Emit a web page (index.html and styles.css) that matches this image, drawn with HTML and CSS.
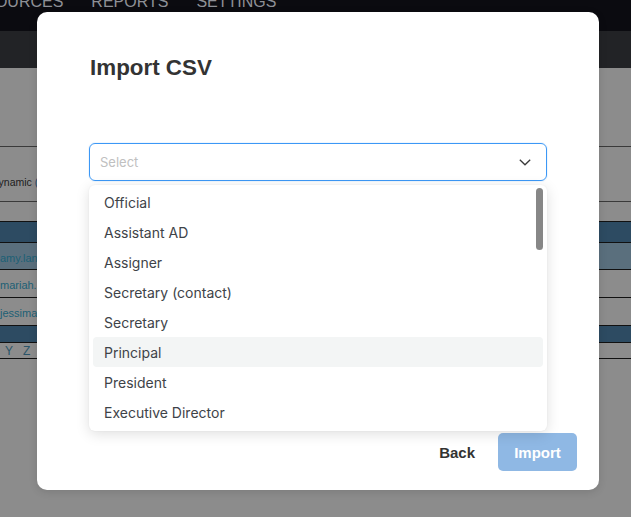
FILE: index.html
```html
<!DOCTYPE html>
<html>
<head>
<meta charset="utf-8">
<link rel="stylesheet" href="styles.css">
</head>
<body>
<div class="page">
  <div class="topnav">
    <span class="navitem">RESOURCES</span>
    <span class="navitem">REPORTS</span>
    <span class="navitem">SETTINGS</span>
  </div>
  <div class="subbar"></div>
  <div class="content">
    <div class="gap1"></div>
    <div class="row r-plain">Dynamic&nbsp;<span class="blue">(</span></div>
    <div class="row r-empty"></div>
    <div class="row r-head"></div>
    <div class="row r-sel link">amy.lane</div>
    <div class="row r-data link">mariah.</div>
    <div class="row r-data link">jessima</div>
    <div class="row r-head2"></div>
    <div class="row r-alpha link"><span>X</span><span>Y</span><span>Z</span></div>
  </div>
</div>

<div class="modal">
  <h1 class="title">Import CSV</h1>
  <div class="field">
    <div class="select">
      <span class="placeholder">Select</span>
      <svg class="chev" width="12" height="7" viewBox="0 0 12 7"><path d="M0.8 0.8 L6 5.8 L11.2 0.8" fill="none" stroke="#3a3a3a" stroke-width="1.3"/></svg>
    </div>
    <div class="menu">
      <div class="item">Official</div>
      <div class="item">Assistant AD</div>
      <div class="item">Assigner</div>
      <div class="item">Secretary (contact)</div>
      <div class="item">Secretary</div>
      <div class="item active">Principal</div>
      <div class="item">President</div>
      <div class="item">Executive Director</div>
      <div class="scroll"></div>
    </div>
  </div>
  <div class="footer">
    <button class="btn back">Back</button>
    <button class="btn import">Import</button>
  </div>
</div>
</body>
</html>
```

FILE: styles.css
```css
html, body {
  margin: 0;
  padding: 0;
}
body {
  width: 631px;
  height: 517px;
  overflow: hidden;
  background: #8c8c8c;
  font-family: "Liberation Sans", Arial, sans-serif;
  position: relative;
}
.topnav {
  height: 31px;
  background: #0b0b10;
  display: flex;
  gap: 28px;
  overflow: hidden;
}
.navitem {
  font-size: 16px;
  line-height: 18px;
  color: #8e9096;
  margin-top: -7px;
}
.navitem:first-child {
  margin-left: -38px;
}
.subbar {
  height: 37px;
  background: #222326;
}
.content {
  display: flex;
  flex-direction: column;
}
.gap1 {
  height: 78px;
  border-bottom: 1px solid #3a3a3a;
}
.row {
  font-size: 11px;
  color: #1c1c1c;
  display: flex;
  align-items: center;
  white-space: nowrap;
  box-sizing: border-box;
}
.blue { color: #22456a; }
.r-plain {
  height: 55px;
  padding-top: 16px;
  margin-left: -9px;
  font-size: 10.5px;
  border-bottom: 1px solid #3a3a3a;
}
.r-empty {
  height: 20px;
  border-bottom: 1px solid #111;
}
.r-head {
  height: 21px;
  background: #2d4b62;
  border-bottom: 1px solid #111;
}
.r-sel {
  height: 27px;
  padding-top: 3px;
  background: #5a6f7d;
  border-bottom: 1px solid #111;
}
.r-data {
  height: 28px;
  padding-top: 2px;
  border-bottom: 1px solid #111;
}
.link { color: #1c6075; }
.r-head2 {
  height: 17px;
  background: #2d4b62;
  border-bottom: 1px solid #111;
}
.r-alpha {
  height: 16px;
  border-bottom: 1px solid #111;
  gap: 10px;
  font-size: 12px;
  margin-left: -13px;
  color: #2a5468;
}

.modal {
  position: absolute;
  left: 37px;
  top: 12px;
  width: 562px;
  height: 478px;
  background: #ffffff;
  border-radius: 10px;
  box-shadow: 0 2px 8px rgba(0,0,0,0.12);
  display: flex;
  flex-direction: column;
  box-sizing: border-box;
}
.title {
  margin: 43px 52px 0 53px;
  font-size: 22.4px;
  line-height: 26px;
  font-weight: bold;
  color: #333333;
}
.field {
  position: relative;
  margin: 62px 52px 0 52px;
}
.select {
  height: 38px;
  box-sizing: border-box;
  border: 1px solid #3c98f6;
  border-radius: 6px;
  display: flex;
  align-items: center;
  justify-content: space-between;
  padding: 0 15px 1px 10px;
  box-shadow: 0 0 0 1px rgba(60,152,246,0.08);
}
.placeholder {
  font-family: Inter, "Noto Sans", sans-serif;
  font-size: 13px;
  color: #c0c0c0;
}
.chev {
  display: block;
  margin-top: 1px;
}
.menu {
  position: absolute;
  left: 0;
  right: 0;
  top: 42px;
  height: 246px;
  box-sizing: border-box;
  padding: 2px 4px 4px;
  background: #ffffff;
  border-radius: 6px;
  box-shadow: 0 3px 14px rgba(0,0,0,0.13), 0 0 2px rgba(0,0,0,0.06);
  display: flex;
  flex-direction: column;
  z-index: 2;
}
.item {
  height: 30px;
  flex: 0 0 30px;
  display: flex;
  align-items: center;
  padding-left: 11px;
  border-radius: 4px;
  font-family: Inter, "Noto Sans", sans-serif;
  font-size: 14px;
  color: #3e4348;
}
.item.active {
  background: #f3f5f5;
}
.scroll {
  position: absolute;
  right: 4px;
  top: 3px;
  width: 7px;
  height: 62px;
  border-radius: 4px;
  background: #878787;
}
.footer {
  margin-top: auto;
  display: flex;
  justify-content: flex-end;
  align-items: center;
  padding: 0 22px 19px 0;
}
.btn {
  height: 38px;
  border: none;
  font-family: "Liberation Sans", Arial, sans-serif;
  font-size: 15px;
  font-weight: bold;
  border-radius: 5px;
  cursor: pointer;
}
.back {
  background: transparent;
  color: #333333;
  padding: 0 16px;
  margin-right: 7px;
}
.import {
  background: #8fb8e4;
  color: #ffffff;
  width: 79px;
  padding: 0;
}
```
